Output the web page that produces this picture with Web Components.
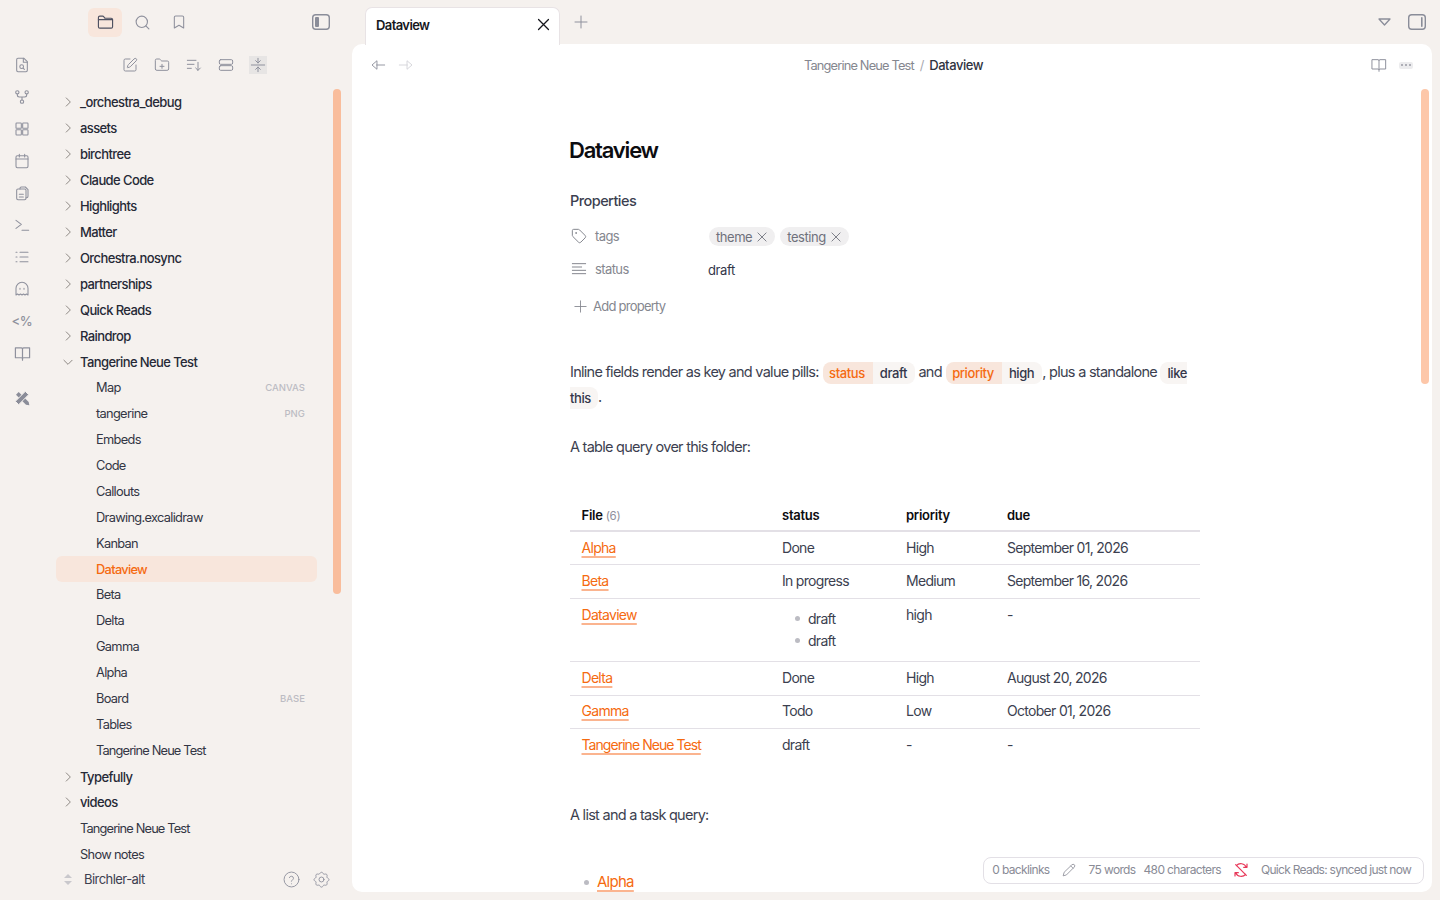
<!DOCTYPE html>
<html lang="en"><head><meta charset="utf-8"><title>Dataview</title>
<style>
html,body{margin:0;height:100%;overflow:hidden;background:#f5f1ee;font-family:Inter,"Liberation Sans",sans-serif;color:#2e3140}
</style></head><body>
<app-shell>
  <app-ribbon slot="ribbon"></app-ribbon>
  <app-sidebar slot="sidebar">
    <tree-row kind="folder">_orchestra_debug</tree-row>
    <tree-row kind="folder">assets</tree-row>
    <tree-row kind="folder">birchtree</tree-row>
    <tree-row kind="folder">Claude Code</tree-row>
    <tree-row kind="folder">Highlights</tree-row>
    <tree-row kind="folder">Matter</tree-row>
    <tree-row kind="folder">Orchestra.nosync</tree-row>
    <tree-row kind="folder">partnerships</tree-row>
    <tree-row kind="folder">Quick Reads</tree-row>
    <tree-row kind="folder">Raindrop</tree-row>
    <tree-row kind="folder" open>Tangerine Neue Test</tree-row>
    <tree-row kind="child" badge="CANVAS">Map</tree-row>
    <tree-row kind="child" badge="PNG">tangerine</tree-row>
    <tree-row kind="child">Embeds</tree-row>
    <tree-row kind="child">Code</tree-row>
    <tree-row kind="child">Callouts</tree-row>
    <tree-row kind="child">Drawing.excalidraw</tree-row>
    <tree-row kind="child">Kanban</tree-row>
    <tree-row kind="child" active>Dataview</tree-row>
    <tree-row kind="child">Beta</tree-row>
    <tree-row kind="child">Delta</tree-row>
    <tree-row kind="child">Gamma</tree-row>
    <tree-row kind="child">Alpha</tree-row>
    <tree-row kind="child" badge="BASE">Board</tree-row>
    <tree-row kind="child">Tables</tree-row>
    <tree-row kind="child" tight>Tangerine Neue Test</tree-row>
    <tree-row kind="folder">Typefully</tree-row>
    <tree-row kind="folder">videos</tree-row>
    <tree-row kind="root" tight>Tangerine Neue Test</tree-row>
    <tree-row kind="root">Show notes</tree-row>
  </app-sidebar>
  <app-tabs slot="tabs"></app-tabs>
  <app-main slot="main">
    <note-view></note-view>
  </app-main>
</app-shell>
<script>
const P={
folder:'<path d="M20 20a2 2 0 0 0 2-2V8a2 2 0 0 0-2-2h-7.900a2 2 0 0 1-1.690-.9L9.600 3.900A2 2 0 0 0 7.930 3H4a2 2 0 0 0-2 2v13a2 2 0 0 0 2 2Z"/><path d="M2 8h20"/>',
search:'<circle cx="11" cy="11" r="8"/><path d="m21 21-4.300-4.300"/>',
bookmark:'<path d="m19 21-7-4-7 4V5a2 2 0 0 1 2-2h10a2 2 0 0 1 2 2v16z"/>',
edit:'<path d="M12 3H5a2 2 0 0 0-2 2v14a2 2 0 0 0 2 2h14a2 2 0 0 0 2-2v-7"/><path d="M18.375 2.625a1 1 0 0 1 3 3l-9.013 9.014a2 2 0 0 1-.853.505l-2.873.84a.5.5 0 0 1-.62-.62l.84-2.873a2 2 0 0 1 .506-.852z"/>',
folderplus:'<path d="M20 20a2 2 0 0 0 2-2V8a2 2 0 0 0-2-2h-7.900a2 2 0 0 1-1.690-.9L9.600 3.900A2 2 0 0 0 7.930 3H4a2 2 0 0 0-2 2v13a2 2 0 0 0 2 2Z"/><path d="M12 11v6M9 14h6"/>',
sort:'<path d="M2 5h13M2 11h10M2 17h6M18 8v12M14.500 16.500 18 20l3.500-3.500"/>',
expand:'<rect x="2" y="4" width="20" height="7" rx="2"/><rect x="2" y="13" width="20" height="7" rx="2"/>',
collapse:'<path d="M12 2v7M8.500 5.500 12 9l3.500-3.500M12 22v-7M8.500 18.500 12 15l3.500 3.500M2 12h20"/>',
filesearch:'<path d="M6 2h9l5 5v13a2 2 0 0 1-2 2H6a2 2 0 0 1-2-2V4a2 2 0 0 1 2-2z"/><path d="M14 2v6h6"/><circle cx="11.500" cy="14.500" r="2.800"/><path d="m13.600 16.600 2 2"/>',
graph:'<circle cx="5" cy="5" r="2.500"/><circle cx="19" cy="5" r="2.500"/><circle cx="12" cy="19" r="2.500"/><path d="M5 7.500V9a3 3 0 0 0 3 3h8a3 3 0 0 0 3-3V7.500M12 12v4.500"/>',
grid:'<rect x="3" y="3" width="8" height="8" rx="1"/><rect x="13" y="3" width="8" height="8" rx="1"/><rect x="3" y="13" width="8" height="8" rx="1"/><rect x="13" y="13" width="8" height="8" rx="1"/>',
calendar:'<rect x="3" y="4" width="18" height="18" rx="2"/><path d="M8 2v4M16 2v4M3 9h18"/>',
copy:'<path d="M9 6V5a2 2 0 0 1 2-2h6l4 4v10a2 2 0 0 1-2 2h-1"/><rect x="4" y="6" width="14" height="16" rx="2"/><path d="M8 14h6M8 18h6"/>',
terminal:'<path d="m3 5 8 6-8 6M12 20h10"/>',
list:'<path d="M9 5h12M9 12h12M9 19h12M3 5h1.500M3 12h1.500M3 19h1.500"/>',
ghost:'<path d="M3 21V11a9 9 0 0 1 18 0v10l-2.250-1.500L16.500 21l-2.250-1.500L12 21l-2.250-1.500L7.500 21l-2.250-1.500z"/><path d="M9 11v1.500M15 11v1.500"/>',
book:'<path d="M2 4h8.500A1.500 1.500 0 0 1 12 5.500 1.500 1.500 0 0 1 13.500 4H22v14h-8.500a1.500 1.500 0 0 0-1.500 1.500 1.500 1.500 0 0 0-1.500-1.500H2zM12 5.500V21.500"/>',
chevron:'<path d="m9 5 7 7-7 7"/>',
chevrondown:'<path d="m5 9 7 7 7-7"/>',
x:'<path d="M5 5l14 14M19 5 5 19"/>',
plus:'<path d="M12 3v18M3 12h18"/>',
help:'<circle cx="12" cy="12" r="10.500"/><path d="M9 9.300a3 3 0 0 1 5.800 1c0 2-3 2.700-3 4.200M12 18h.01"/>',
gear:'<path d="M10.300 2.600a2 2 0 0 1 3.400 0l.6 1a2 2 0 0 0 2 .9l1.200-.2a2 2 0 0 1 2.400 2.400l-.2 1.200a2 2 0 0 0 .9 2l1 .6a2 2 0 0 1 0 3.400l-1 .6a2 2 0 0 0-.9 2l.2 1.200a2 2 0 0 1-2.400 2.400l-1.200-.2a2 2 0 0 0-2 .9l-.6 1a2 2 0 0 1-3.400 0l-.6-1a2 2 0 0 0-2-.9l-1.200.2a2 2 0 0 1-2.400-2.400l.2-1.200a2 2 0 0 0-.9-2l-1-.6a2 2 0 0 1 0-3.400l1-.6a2 2 0 0 0 .9-2l-.2-1.200a2 2 0 0 1 2.400-2.400l1.200.2a2 2 0 0 0 2-.9z"/><circle cx="12" cy="12" r="3.500"/>',
tag:'<path d="M12.600 2.600a2 2 0 0 0-1.400-.6H4a2 2 0 0 0-2 2v7.200a2 2 0 0 0 .6 1.400l8.700 8.700a2.400 2.400 0 0 0 3.400 0l6.600-6.600a2.400 2.400 0 0 0 0-3.400z"/><circle cx="7.500" cy="7.500" r=".6"/>',
lines:'<path d="M2 4h20M2 9h14M2 14h20M2 19h20"/>',
pencil:'<path d="M17 3a2.830 2.830 0 1 1 4 4L7.500 20.500 2 22l1.500-5.500z"/><path d="m15 5 4 4"/>',
syncoff:'<path d="M21 3v5h-5M3 21v-5h5M20 8a9 9 0 0 0-15-2.500M4 16a9 9 0 0 0 15 2.500M4 4l16 16"/>',
back:'<path d="M22 12H10M10 6 3 12l7 6z"/>',
fwd:'<path d="M2 12h12M14 6l7 6-7 6z"/>'
};
const ic=(n,s=16,sw=1.8,c='currentColor')=>`<svg width="${s}" height="${s}" viewBox="0 0 24 24" fill="none" stroke="${c}" stroke-width="${sw}" stroke-linecap="round" stroke-linejoin="round" aria-hidden="true">${P[n]}</svg>`;
const panelIcon=(side)=>`<svg width="20" height="18" viewBox="0 0 20 18" fill="none" aria-hidden="true"><rect x="1.700" y="1.700" width="16.600" height="14.600" rx="3" stroke="#8a8d99" stroke-width="1.400"/>${side==='l'?'<rect x="4" y="4" width="4" height="10" rx="1" fill="#8a8d99"/>':'<rect x="14" y="4" width="1.600" height="10" rx=".8" fill="#8a8d99"/>'}</svg>`;
function def(name,html,setup){
  customElements.define(name,class extends HTMLElement{
    constructor(){super();this.attachShadow({mode:'open'}).innerHTML=typeof html==='function'?html(this):html;}
    connectedCallback(){
      if(typeof html==='function')this.shadowRoot.innerHTML=html(this);
      if(setup)setup(this);
    }
  });
}
def('app-shell',`<style>
:host{display:grid;grid-template-columns:44px 308px 1fr;grid-template-rows:44px 848px;width:1440px;height:900px;overflow:hidden;position:relative}
.r{grid-row:1/3;grid-column:1}.s{grid-row:1/3;grid-column:2}.t{grid-row:1;grid-column:3}.m{grid-row:2;grid-column:3;margin-right:8px;min-height:0;display:block}
</style><div class="r"><slot name="ribbon"></slot></div><div class="s"><slot name="sidebar"></slot></div><div class="t"><slot name="tabs"></slot></div><div class="m"><slot name="main"></slot></div>`);
def('app-ribbon',()=>{
 const items=['filesearch','graph','grid','calendar','copy','terminal','list','ghost'];
 return `<style>
:host{display:flex;flex-direction:column;align-items:center;padding-top:57px;color:#8f919d;width:44px}
.i{height:32px;display:flex;align-items:flex-start;justify-content:center;width:44px}
.i svg{display:block}
.pct{font:500 13px/16px Inter,sans-serif;letter-spacing:-.4px;color:#8f919d}
.tools{margin-top:13px}
</style>${items.map(n=>`<div class="i">${ic(n,16,1.6)}</div>`).join('')}
<div class="i"><span class="pct">&lt;%</span></div>
<div class="i">${ic('book',17,1.7)}</div>
<div class="i tools"><svg width="16" height="16" viewBox="0 0 24 24" fill="#8b8d99" aria-hidden="true"><path d="M3 7 7 3l15 15 1 5-5-1z"/><path d="M17 2l5 5-15 15-5-5z" stroke="#f5f1ee" stroke-width="1.500"/></svg></div>`;});
def('app-sidebar',`<style>
:host{display:flex;flex-direction:column;height:900px;position:relative;color:#8f919d}
.top{height:44px;display:flex;align-items:center;padding-left:44px;box-sizing:border-box;gap:3px;padding-right:14px}
.b{width:34px;height:29px;border-radius:6px;display:flex;align-items:center;justify-content:center}
.b.on{background:#f8e6dc;color:#4d5060}
.sp{flex:1}
.acts{height:42px;display:flex;align-items:center;justify-content:center;gap:14px;width:300px}
.acts span{width:18px;height:18px;display:flex;align-items:center;justify-content:center}
.acts .g{background:#e7e5e4}
.tree{padding:3.200px 35px 0 12px;display:block}
.vault{display:flex;align-items:center;height:26px;margin:-1.200px 22px 0 12px;color:#3d4050;font-size:13px;font-weight:400;letter-spacing:-.55px}
.vault .ud{width:24px;display:flex;flex-direction:column;align-items:center;gap:3px;margin-right:4px}
.vault i{display:block;width:0;height:0;border:4px solid transparent}
.vault .u{border-top:0;border-bottom:4px solid #c9c8cc}.vault .d{border-bottom:0;border-top:4px solid #c9c8cc}
.vault .r{flex:1}.vault svg{display:block;margin-left:13px;color:#8f919d}
.bar{position:absolute;left:289px;top:89px;width:8px;height:505px;border-radius:4px;background:#f9bd9c}
</style>
<div class="top"><div class="b on">${ic('folder',17,1.6)}</div><div class="b">${ic('search',17,1.6)}</div><div class="b">${ic('bookmark',16,1.6)}</div><div class="sp"></div><div class="b">${panelIcon('l')}</div></div>
<div class="acts"><span>${ic('edit',16,1.5)}</span><span>${ic('folderplus',16,1.5)}</span><span>${ic('sort',16,1.5)}</span><span>${ic('expand',16,1.5)}</span><span class="g">${ic('collapse',16,1.5)}</span></div>
<div class="tree"><slot></slot></div>
<div class="vault"><div class="ud"><i class="u"></i><i class="d"></i></div><span class="r">Birchler-alt</span>${ic('help',17,1.3)}${ic('gear',17,1.3)}</div>
<div class="bar"></div>`);
def('tree-row',(h)=>{
 const k=h.getAttribute('kind'),open=h.hasAttribute('open'),b=h.getAttribute('badge');
 return `<style>
:host{display:flex;align-items:center;height:25.94px;box-sizing:border-box;border-radius:6px;font-size:12.800px;letter-spacing:-.68px;color:#333644;padding-right:12px}
:host([tight]){letter-spacing:-.84px}
:host([kind=folder]){font-weight:500;color:#262936;font-size:13px;letter-spacing:-.6px}
:host([kind=child]){padding-left:40px}
:host([kind=root]){padding-left:24px}
:host([active]){background:#f8e6dc;color:#f56a10;font-weight:500}
.c{width:24px;display:flex;justify-content:center;color:#85807c}
.l{flex:1;white-space:nowrap}
.b{font-size:9.500px;font-weight:500;color:#bcbcc3;letter-spacing:.05px}
svg{display:block}
</style>${k==='folder'?`<span class="c">${ic(open?'chevrondown':'chevron',14,1.6)}</span>`:''}<span class="l"><slot></slot></span>${b?`<span class="b">${b}</span>`:''}`;});
def('app-tabs',`<style>
:host{display:flex;height:44px;position:relative;color:#8f919d;align-items:flex-start}
.tab{margin:6.500px 0 0 13px;width:195px;height:38px;box-sizing:border-box;background:#fff;border:1px solid #e8e3e5;border-bottom:0;border-radius:7px 7px 0 0;display:flex;align-items:center;padding:0 7px 3px 10px;font-size:13px;font-weight:600;color:#16171d;letter-spacing:-.6px;position:relative;z-index:1}
.tab span{flex:1}.tab svg{display:block;color:#16171d}
.plus{margin:14px 0 0 13px}.sp{flex:1}
.tri{margin:18px 0 0 0;width:13px;height:8px}
.pn{margin:13px 13px 0 16px}
svg{display:block}
</style><div class="tab"><span>Dataview</span>${ic('x',17,1.8)}</div><div class="plus">${ic('plus',16,1.500)}</div><div class="sp"></div>
<svg class="tri" viewBox="0 0 13 8" fill="none"><path d="M1 1h11L6.500 7z" stroke="#8a8d99" stroke-width="1.300" stroke-linejoin="round"/></svg><div class="pn">${panelIcon('r')}</div>`);
def('app-main',`<style>
:host{display:flex;flex-direction:column;height:848px;background:#fff;border-radius:10px;position:relative;overflow:hidden}
.nav{height:42px;flex:none;display:flex;align-items:center;padding:0 19px 0 18px;color:#8f919d}
.nav svg{display:block}
.a{width:16px;margin-right:12px}.a.off{color:#d4d4d9}
.crumb{flex:1;text-align:center;font-size:12.800px;letter-spacing:-.82px;color:#85878f;padding-right:10px}
.crumb b{font-weight:500;font-size:13px;letter-spacing:-.45px;color:#30333f}.crumb i{font-style:normal;margin:0 3px;color:#a9a9b0}
.more{margin-left:12px;width:14px;height:7px;background:#ececee;border-radius:2px;display:flex;align-items:center;justify-content:center;gap:2px}
.more u{display:block;width:2px;height:2px;border-radius:50%;background:#9a9ba4}
.body{flex:1;overflow:hidden;min-height:0}
.bar{position:absolute;left:1069px;top:45px;width:8px;height:295px;border-radius:4px;background:#fdc7a9}
status-bar{position:absolute;right:8px;bottom:8px}
</style>
<div class="nav"><span class="a">${ic('back',16,1.4)}</span><span class="a off">${ic('fwd',16,1.4)}</span><div class="crumb">Tangerine Neue Test <i>/</i> <b>Dataview</b></div>${ic('book',16,1.5)}<span class="more"><u></u><u></u><u></u></span></div>
<div class="body"><slot></slot></div><div class="bar"></div><status-bar></status-bar>`);
def('status-bar',`<style>
:host{display:flex;align-items:center;height:27px;box-sizing:border-box;border:1px solid #e3e0e6;border-radius:8px;background:#fff;padding:0 12px 2px 8px;font-size:12px;letter-spacing:-.65px;color:#898b96;white-space:nowrap}
svg{display:block}.p{margin:0 13px 0 12px}.w{margin-right:8px}.s{margin:0 12px 0 12px}.q{letter-spacing:-.72px}
</style><span>0 backlinks</span><span class="p">${ic('pencil',14,1.400)}</span><span class="w">75 words</span><span>480 characters</span><span class="s">${ic('syncoff',16,1.800,'#e8395a')}</span><span class="q">Quick Reads: synced just now</span>`);
def('inline-field',(h)=>{
 const k=h.getAttribute('k'),v=h.getAttribute('v');
 return `<style>
:host{display:inline;font-size:13px;letter-spacing:-.4px}
span{padding:3px 7px 3px 7px;line-height:18px;position:relative;top:1px}
.k{background:#f8e6dc;color:#f56a10;border-radius:8px 0 0 8px;font-weight:500;padding:3px 8px 3px 6px;margin-left:1px}
.v{background:#f8f5f3;color:#33364a;font-weight:500;border-radius:0 8px 8px 0;padding-right:8px}
.solo{background:#f8f5f3;color:#33364a;font-weight:500;border-radius:8px}
</style>${k?`<span class="k">${k}</span><span class="v">${v}</span>`:`<span class="solo">${v}</span>`}`;});
def('tag-pill',`<style>
:host{display:inline-flex;align-items:center;height:19px;border-radius:10px;background:#f0eff0;padding:0 6px 0 7px;font-size:13px;color:#6f717c;gap:3px;letter-spacing:-.45px}
svg{display:block}
</style><slot></slot>${ic('x',14,1.500)}`);
def('note-link',`<style>
:host{display:inline;color:#f56a10}
span{text-decoration:underline;text-decoration-color:#fbb48f;text-decoration-thickness:1.500px;text-underline-offset:3px}
:host([tight]) span{letter-spacing:-.95px}
</style><span><slot></slot></span>`);
def('note-view',`<style>
:host{display:block;margin-left:218px;width:630px;font-size:14.500px;letter-spacing:-.73px;color:#3c3f50}
h1{font-size:22px;font-weight:600;color:#0c0c10;letter-spacing:-1.200px;margin:0 0 0 -1px;padding-top:50px;line-height:28px}
h2{font-size:14.500px;font-weight:500;margin:27px 0 0;letter-spacing:-.55px;line-height:20px;color:#3c3f50}
.pr{display:grid;grid-template-columns:138px 1fr;align-items:center;height:33px;font-size:13px;color:#85878f;letter-spacing:-.6px}
.pr .n{display:flex;align-items:center;gap:8px;padding-left:1px}
.pr svg{display:block}
.vals{display:flex;gap:5px;padding:2px 0 0 1px;color:#33364a}
.add{display:flex;align-items:center;gap:5px;height:24px;margin-top:9px;padding-left:3px;font-size:13px;color:#85878f;letter-spacing:-.75px}
.add svg{display:block}
p{margin:0;line-height:24px}
.f{margin-top:42px;line-height:24.500px}
.q{margin-top:26px}
table{border-collapse:collapse;width:630px;table-layout:fixed;margin-top:41px;font-size:14px;letter-spacing:-.7px}
th{font-size:13px;font-weight:600;color:#0c0c10;text-align:left;padding:0 12px;height:30px;border-bottom:2px solid #e3e0e6;letter-spacing:-.25px}
th small{font-size:11.500px;font-weight:400;color:#8f919d}
th:first-child,td:first-child{padding-left:11.500px}
td{padding:0 12px 2px;height:33.500px;box-sizing:border-box;border-bottom:1px solid #e3e0e6;vertical-align:middle;color:#3c3f50}
tr:last-child td{border-bottom:0}
tr.tall td{height:63.500px;vertical-align:top;padding-top:7px}
ul{margin:0;padding:0;list-style:none}
td ul{margin:2px 0 0 13px}
td li{line-height:22px;font-size:14px;display:flex;align-items:center;gap:8px}
li::before{content:"";width:5px;height:5px;border-radius:50%;background:#bcbcc3;flex:none}
.l2{margin-top:41px}
.alist{margin-top:43px;padding-left:14px}
.alist li{display:flex;align-items:center;gap:8px;font-size:15px;line-height:24px}
</style>
<h1>Dataview</h1>
<h2>Properties</h2>
<div style="height:8px"></div>
<div class="pr"><div class="n">${ic('tag',16,1.500)}<span>tags</span></div><div class="vals"><tag-pill>theme</tag-pill><tag-pill>testing</tag-pill></div></div>
<div class="pr"><div class="n">${ic('lines',16,1.500)}<span>status</span></div><div style="color:#33364a;padding-top:2px;letter-spacing:-.4px">draft</div></div>
<div class="add">${ic('plus',15,1.400)}<span>Add property</span></div>
<p class="f">Inline fields render as key and value pills: <inline-field k="status" v="draft"></inline-field> and <inline-field k="priority" v="high"></inline-field>, plus a standalone <inline-field v="like this"></inline-field>.</p>
<p class="q">A table query over this folder:</p>
<table><colgroup><col style="width:200px"><col style="width:124px"><col style="width:101px"><col></colgroup>
<thead><tr><th>File <small>(6)</small></th><th>status</th><th>priority</th><th>due</th></tr></thead>
<tbody>
<tr><td><note-link>Alpha</note-link></td><td>Done</td><td>High</td><td>September 01, 2026</td></tr>
<tr><td><note-link>Beta</note-link></td><td>In progress</td><td>Medium</td><td>September 16, 2026</td></tr>
<tr class="tall"><td><note-link>Dataview</note-link></td><td><ul><li>draft</li><li>draft</li></ul></td><td>high</td><td>-</td></tr>
<tr><td><note-link>Delta</note-link></td><td>Done</td><td>High</td><td>August 20, 2026</td></tr>
<tr><td><note-link>Gamma</note-link></td><td>Todo</td><td>Low</td><td>October 01, 2026</td></tr>
<tr><td><note-link tight>Tangerine Neue Test</note-link></td><td>draft</td><td>-</td><td>-</td></tr>
</tbody></table>
<p class="l2">A list and a task query:</p>
<ul class="alist"><li><note-link>Alpha</note-link></li></ul>`);
</script>
</body></html>
